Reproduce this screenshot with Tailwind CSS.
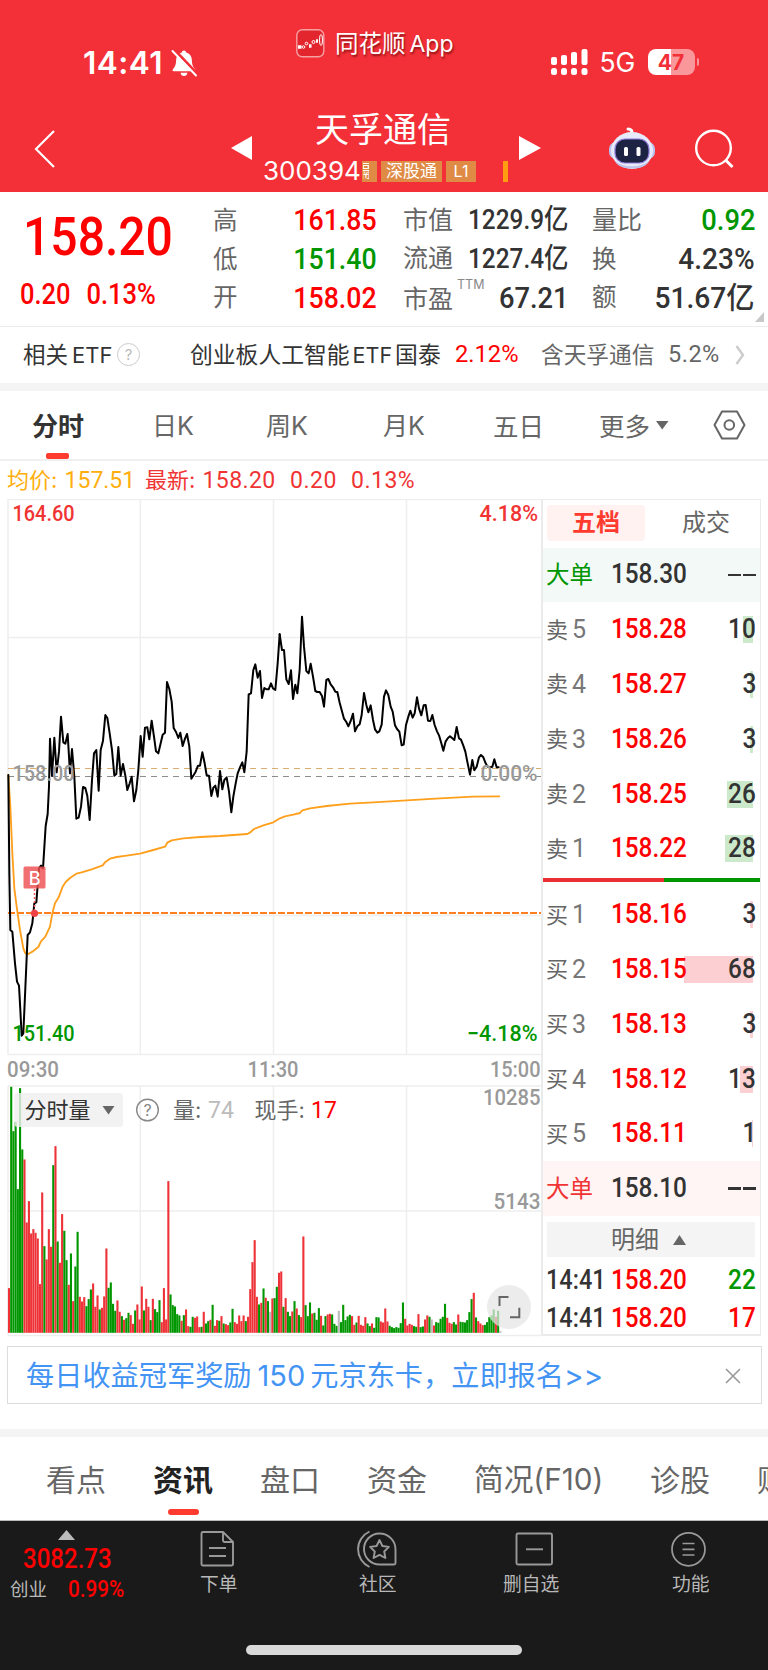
<!DOCTYPE html>
<html lang="zh-CN">
<head>
<meta charset="utf-8">
<title>天孚通信 300394</title>
<script src="https://cdn.jsdelivr.net/npm/@tailwindcss/browser@4"></script>
</head>
<body class="w-[768px] bg-white font-['Inter','Noto_Sans_CJK_SC',sans-serif] leading-none text-[#333] whitespace-nowrap overflow-x-hidden">
<div class="flex h-[1670px] w-[768px] flex-col overflow-hidden">

<!-- header -->
<header class="h-[192px] shrink-0 bg-[#f32f38] text-white">
  <div class="flex h-[96px] items-start">
    <div class="ml-[83px] mt-[47px] flex w-[213px] shrink-0 items-center">
      <span class="w-[86px] text-[31.500px] font-semibold tracking-[0.500px]">14:41</span>
      <svg class="ml-px" width="28" height="28" viewBox="0 0 28 28"><path d="M14 1.500c1.300 0 2.100.9 2.200 2 3.600 1 5.600 4 5.700 7.800.1 5 1.300 6.900 3.300 9.200.6.900.2 1.700-.8 1.700H3.600c-1 0-1.400-.8-.8-1.700 2-2.300 3.200-4.200 3.300-9.200.1-3.800 2.100-6.800 5.700-7.800.1-1.100.9-2 2.200-2zM10.500 23.700h7c-.3 2-1.700 3.300-3.500 3.300s-3.200-1.300-3.500-3.300z" fill="#fff"/><path d="M4.500 1 27 24.500" stroke="#f32f38" stroke-width="3"/><path d="M2.500 2 26 26.500" stroke="#fff" stroke-width="2" stroke-linecap="round"/></svg>
    </div>
    <div class="mt-[29px] flex w-[255px] shrink-0 items-center gap-[10px]">
      <svg width="29" height="29" viewBox="0 0 29 29"><rect x=".8" y=".8" width="27" height="27" rx="5.500" fill="#e3262e" stroke="#f5a0a2" stroke-width="1.400"/><path d="M2 18h3.500M13 17h2.500M20 12h2" stroke="#fff" stroke-width="3.500"/><g fill="none" stroke="#fff" stroke-width="1"><circle cx="7.500" cy="18" r="1.300"/><circle cx="10.500" cy="14.500" r="1.300"/><circle cx="17.500" cy="13" r="1.500"/><ellipse cx="25" cy="11" rx="1.500" ry="5.500"/></g></svg>
      <span class="text-[23.500px] [text-shadow:1px_2px_2px_rgba(80,0,0,.6)]">同花顺<span class="ml-[4px] text-[23px]">App</span></span>
    </div>
    <div class="mt-[48px] flex h-[28px] shrink-0 items-center">
      <svg width="38" height="28" viewBox="551 48 38 28" fill="#fff"><rect x="551" y="57" width="6" height="8" rx="2"/><rect x="561" y="55" width="6" height="10" rx="2"/><rect x="571" y="52" width="6" height="13" rx="2"/><rect x="581.500" y="49" width="6" height="16" rx="2"/><rect x="551" y="68" width="6" height="7" rx="2.500"/><rect x="561" y="68" width="6" height="7" rx="2.500"/><rect x="571" y="68" width="6" height="7" rx="2.500"/><rect x="581.500" y="68" width="6" height="7" rx="2.500"/></svg>
      <span class="ml-[10.500px] w-[36px] text-[26.500px]">5G</span>
      <div class="ml-[12px] flex h-[26px] w-[47px] items-center justify-center rounded-[8px] bg-linear-to-r from-white from-48% to-[#f9979b] to-48% text-[21px] font-bold text-[#f32f38]">47</div>
      <div class="ml-[2px] h-[8px] w-[2.500px] rounded-r-full bg-[#f9979b]"></div>
    </div>
  </div>
  <div class="flex h-[96px] items-start">
    <svg class="ml-[30px] mt-[30px] shrink-0" width="30" height="46" viewBox="30 126 30 46"><path d="M54 131 36 149l18 18" fill="none" stroke="#fff" stroke-width="2.200"/></svg>
    <svg class="ml-[171px] mt-[38px] shrink-0" width="22" height="28" viewBox="231 134 22 28"><path d="m231 148 21-12v24z" fill="#fff"/></svg>
    <div class="ml-[10px] mt-[17px] flex w-[246px] shrink-0 flex-col">
      <div class="pl-[52px] text-[34px]">天孚通信</div>
      <div class="mt-[13px] flex h-[22px] items-center">
        <span class="w-[99px] text-[26px]">300394</span>
        <span class="flex h-[21px] w-[15px] justify-end overflow-hidden bg-[#e08b45] pr-[8px] text-[17px] leading-[21px]"><span class="w-[6px] overflow-hidden"><span class="-ml-[2px]">融</span></span></span>
        <span class="ml-[4px] h-[21px] w-[61px] bg-[#e08b45] text-center text-[17px] leading-[21px]">深股通</span>
        <span class="ml-[4px] h-[21px] w-[30px] bg-[#e08b45] text-center text-[16px] leading-[21px]">L1</span>
        <span class="ml-[27px] h-[21px] w-[5px] bg-[#ff9d12]"></span>
      </div>
    </div>
    <svg class="ml-[10px] mt-[38px] shrink-0" width="23" height="28" viewBox="519 134 23 28"><path d="m541 148-22-12v24z" fill="#fff"/></svg>
    <svg class="ml-[66px] mt-[28px] shrink-0" width="48" height="48" viewBox="608 124 48 48"><path d="M631 133c2-2 0-4-3-4" stroke="#fff" stroke-width="3" fill="none" stroke-linecap="round"/><rect x="609" y="142" width="46" height="17" rx="7" fill="#b9c2ee"/><ellipse cx="632" cy="150.500" rx="21" ry="18.500" fill="#e6eafa"/><path d="M615 161c8 7 26 7 34 0-3 10-31 10-34 0z" fill="#bcc4e8"/><rect x="615" y="139" width="34" height="24" rx="10" fill="#1d2342" stroke="#8d7bd8" stroke-width="1.200"/><rect x="624" y="147" width="4" height="9" rx="1.500" fill="#fff"/><rect x="636.500" y="147" width="4" height="9" rx="1.500" fill="#fff"/></svg>
    <svg class="ml-[36px] mt-[30px] shrink-0" width="44" height="44" viewBox="692 126 44 44" fill="none" stroke="#fff" stroke-width="2.400"><circle cx="713.500" cy="148" r="17.300"/><path d="m725.500 160 7 7" stroke-width="3"/></svg>
  </div>
</header>

<!-- quote -->
<section class="relative grid h-[134px] shrink-0 grid-cols-[213px_190px_189px_176px] pt-[9px] text-[24.500px] text-[#666]">
  <div class="font-[Roboto] font-medium text-[#ff0000]">
    <div class="ml-[23px] mt-[9px] origin-left scale-x-[.89] text-[54px]">158.20</div>
    <div class="ml-[20px] mt-[16px] flex gap-[18px] origin-left scale-x-[.88] text-[29px]"><span>0.20</span><span>0.13%</span></div>
  </div>
  <div class="grid h-[116px] grid-rows-3 items-center pr-[26px] *:flex *:items-center *:justify-between">
    <div><span>高</span><span class="origin-right scale-x-[.89] font-[Roboto] text-[30px] font-medium text-[#ff0000]">161.85</span></div>
    <div><span>低</span><span class="origin-right scale-x-[.89] font-[Roboto] text-[30px] font-medium text-[#009600]">151.40</span></div>
    <div><span>开</span><span class="origin-right scale-x-[.89] font-[Roboto] text-[30px] font-medium text-[#ff0000]">158.02</span></div>
  </div>
  <div class="grid h-[116px] grid-rows-3 items-center pr-[26px] *:flex *:items-center *:justify-between">
    <div><span class="text-[25px]">市值</span><span class="origin-right scale-x-[.87] font-['Roboto','Noto_Sans_CJK_SC'] text-[28px] font-medium text-[#333]">1229.9亿</span></div>
    <div><span class="text-[25px]">流通</span><span class="origin-right scale-x-[.87] font-['Roboto','Noto_Sans_CJK_SC'] text-[28px] font-medium text-[#333]">1227.4亿</span></div>
    <div><span class="flex pt-[3px] text-[25px]">市盈<span class="ml-[4px] -mt-[8px] text-[12.500px] text-[#888]">TTM</span></span><span class="origin-right scale-x-[.91] font-[Roboto] text-[30px] font-medium text-[#333]">67.21</span></div>
  </div>
  <div class="grid h-[116px] grid-rows-3 items-center pr-[13px] *:flex *:items-center *:justify-between">
    <div><span class="text-[25px]">量比</span><span class="origin-right scale-x-[.91] font-[Roboto] text-[30px] font-medium text-[#009600]">0.92</span></div>
    <div><span>换</span><span class="origin-right scale-x-[.935] font-[Roboto] text-[30px] font-medium text-[#333]">4.23%</span></div>
    <div><span>额</span><span class="origin-right scale-x-[.94] font-['Roboto','Noto_Sans_CJK_SC'] text-[30px] font-medium text-[#333]">51.67亿</span></div>
  </div>
  <svg class="absolute left-[755px] top-[120px]" width="10" height="10"><path d="M0 10 9 0v10z" fill="#c8c8c8"/></svg>
</section>

<!-- related ETF -->
<section class="flex h-[57px] shrink-0 items-center border-t border-[#ebebeb] text-[22.500px]">
  <span class="ml-[23px] w-[94px] shrink-0">相关<span class="ml-[4px] text-[22px]">ETF</span></span>
  <span class="-mt-[2px] flex size-[23px] shrink-0 items-center justify-center rounded-full border-[1.500px] border-[#ccc] text-[15px] text-[#bbb]">?</span>
  <span class="ml-[50px] w-[265px] shrink-0 text-[22.800px]">创业板人工智能<span class="ml-[3px] mr-[3px] text-[21.500px]">ETF</span>国泰</span>
  <span class="w-[86px] shrink-0 font-[Roboto] text-[23.700px] text-[#ff0000]">2.12%</span>
  <span class="w-[127px] shrink-0 text-[22.700px] text-[#666]">含天孚通信</span>
  <span class="w-[67px] shrink-0 font-[Roboto] text-[23.500px] tracking-[0.500px] text-[#666]">5.2%</span>
  <svg width="10" height="20" viewBox="0 0 10 20"><path d="m1.500 1 6.500 9-6.500 9" fill="none" stroke="#ccc" stroke-width="2.400"/></svg>
</section>
<div class="h-[8px] shrink-0 bg-[#f4f4f4]"></div>

<!-- period tabs -->
<nav class="flex h-[70px] shrink-0 items-center border-b-2 border-[#f0f0f0] pt-[3px] text-[25px] text-[#666]">
  <div class="relative ml-[32px] w-[120px] shrink-0 text-[26px] font-bold text-[#333]">分时<span class="absolute left-[14px] top-[39px] h-[6px] w-[23px] rounded-[2px] bg-[#ff3b30]"></span></div>
  <span class="w-[114px] shrink-0">日K</span>
  <span class="w-[117px] shrink-0">周K</span>
  <span class="w-[110px] shrink-0">月K</span>
  <span class="w-[106px] shrink-0 text-[25.500px]">五日</span>
  <span class="w-[57px] shrink-0 text-[25.500px]">更多</span>
  <svg class="-mt-[3px] shrink-0" width="13" height="9"><path d="M0 0h12.500L6.200 8.500z" fill="#666"/></svg>
  <svg class="-mt-[3px] ml-[44px] shrink-0" width="33" height="30" viewBox="0 0 33 30" fill="none" stroke="#666" stroke-width="2"><path d="M9 1.500h15L31.500 15 24 28.500H9L1.500 15z" stroke-linejoin="round"/><circle cx="16.300" cy="15" r="4.800"/></svg>
</nav>
<div class="flex h-[38px] shrink-0 items-center pt-px text-[22px] text-[#f03434]">
  <span class="ml-[7px] w-[138px] shrink-0 text-[#ffae0d]">均价: <span class="ml-px font-[Roboto] text-[23px]">157.51</span></span>
  <span class="w-[145px] shrink-0">最新: <span class="ml-px font-[Roboto] text-[23px] tracking-[0.400px]">158.20</span></span>
  <span class="w-[61px] shrink-0 font-[Roboto] text-[23px] tracking-[0.500px]">0.20</span>
  <span class="font-[Roboto] text-[23px] tracking-[0.500px]">0.13%</span>
</div>

<!-- chart and order book -->
<main class="flex h-[847px] shrink-0">
  <svg class="shrink-0" width="541" height="847" viewBox="0 499 541 847">
    <g fill="none" stroke="#eee" stroke-width="1.500">
      <path d="M8 499.500H541M8 1054.500H541M8 499v556M140.300 499v555M273.500 499v555M406.500 499v555M8 637.500H541M8 915.500H541"/>
      <path d="M8 1086H541M8 1335.500H541M8 1086v249M140.300 1086v249M273.500 1086v249M406.500 1086v249M8 1211H541"/>
    </g>
    <path d="M8 768.500H541" stroke="#dcae6e" stroke-width="1" stroke-dasharray="6 5"/>
    <path d="M8 776.500H541" stroke="#8c8c8c" stroke-width="1.200" stroke-dasharray="6 5"/>
    <path d="M8 913H541" stroke="#ff7f1e" stroke-width="1.800" stroke-dasharray="7 2"/>
    <g fill="none" stroke="#ff9f1c" stroke-width="5.500" stroke-linejoin="round" stroke-linecap="round">
      <polyline transform="translate(0 740) scale(.33333)" points="25,105 31,200 37,340 43,445 50,500 60,570 70,625 76,640 85,642 97,635 115,621 123,604 136,590 150,560 157,520 165,490 176,472 188,440 197,426 210,414 229,401 245,397 275,388 308,376 315,367 330,356 350,351 380,347 420,341 460,330 495,320 502,308 515,301 550,295 600,291 660,288 742,282 750,278 762,267 790,256 820,247 840,235 855,229 880,224 900,219 907,211 930,205 980,198 1050,191 1120,187 1220,181 1320,175 1420,170 1498,169"/>
    </g>
    <g fill="none" stroke="#000" stroke-width="6" stroke-linejoin="round" stroke-linecap="round">
      <polyline transform="translate(0 490) scale(.33333)" points="25,855 28,1150 31,1320 37,1325 45,1420 51,1475 57,1487 61,1560 65,1637 70,1630 76,1495 83,1335 90,1327 97,1300 103,1240 109,1237 117,1135 123,1127 129,1135 137,1008 143,972 147,890 150,746 156,858 163,743 170,847 177,785 183,680 190,757 196,761 203,732 210,850 216,777 223,860 229,986 236,983 243,950 249,891 256,894 262,918 269,990 276,870 282,790 289,780 296,902 302,780 309,752 316,675 322,684 329,730 336,780 343,857 349,852 355,771 362,857 369,822 376,857 382,900 389,880 395,860 402,934 409,900 415,840 422,738 428,800 435,713 442,712 448,748 455,692 462,740 468,784 475,790 482,760 488,734 495,728 501,576 508,597 515,635 521,714 528,726 535,744 541,728 548,768 555,746 561,732 568,770 574,866 581,855 587,845 594,827 600,827 607,787 614,820 620,856 627,857 634,918 640,893 646,887 653,920 660,843 667,898 673,870 680,862 687,905 694,967 700,920 707,880 713,850 720,832 727,817 733,847 740,785 746,613 753,610 760,540 766,523 773,563 780,543 786,624 793,594 800,598 806,598 813,580 819,595 826,600 833,520 839,433"/>
      <polyline transform="translate(260 590) scale(.33333)" points="59,133 66,180 72,180 79,268 86,282 93,241 99,327 106,284 112,310 119,240 126,80 132,170 139,243 146,250 152,221 159,260 166,303 172,306 179,306 186,318 192,350 199,270 205,267 212,283 219,292 226,305 232,306 239,338 252,386 259,396 265,409 272,393 279,371 285,424 292,409 299,403 305,375 312,309 319,345 325,367 332,346 339,390 345,418 352,428 358,424 365,404 372,320 378,301 385,315 392,350 398,365 405,406 411,417 418,425 425,466 431,464 438,405 445,380 451,362 458,383 464,370 471,322 477,355 484,376 491,346 497,345 504,392 511,393 517,375 524,405 531,424 537,436 544,460 550,482 557,454 564,444 570,439 577,445 583,450 590,411 597,445 603,449 610,467 616,485 623,520 630,554 637,510 643,541 650,530 657,502 663,495 670,502 677,520 683,530 690,532 697,530 703,508 710,532 716,532"/>
    </g>
    <path d="M34.500 889v22" stroke="#f0585c" stroke-width="1.500" stroke-dasharray="2 2"/>
    <circle cx="34.500" cy="913.300" r="3.600" fill="#ee4246"/>
    <rect x="23.500" y="866.500" width="22" height="22" rx="1.500" fill="#ee4e52" fill-opacity=".82"/>
    <text x="34.700" y="884.500" text-anchor="middle" class="fill-white font-[Inter] text-[18px] font-medium">B</text>

    <g id="volume"></g>

    <g class="font-[Roboto] text-[22.500px] font-medium">
      <text x="12.500" y="521" fill="#f03434" textLength="62" lengthAdjust="spacingAndGlyphs">164.60</text>
      <text x="479.500" y="521" fill="#f03434" textLength="58.500" lengthAdjust="spacingAndGlyphs">4.18%</text>
      <text x="12.500" y="781" fill="#999" textLength="62" lengthAdjust="spacingAndGlyphs">158.00</text>
      <text x="480.500" y="781" fill="#999" textLength="57" lengthAdjust="spacingAndGlyphs">0.00%</text>
      <text x="12.500" y="1041" fill="#009600" textLength="62" lengthAdjust="spacingAndGlyphs">151.40</text>
      <text x="467" y="1041" fill="#009600" textLength="70.500" lengthAdjust="spacingAndGlyphs">−4.18%</text>
      <g fill="#999">
        <text x="7" y="1077" textLength="52" lengthAdjust="spacingAndGlyphs">09:30</text>
        <text x="247.500" y="1077" textLength="51" lengthAdjust="spacingAndGlyphs">11:30</text>
        <text x="490" y="1077" textLength="50.500" lengthAdjust="spacingAndGlyphs">15:00</text>
        <text x="483" y="1104.500" textLength="57.500" lengthAdjust="spacingAndGlyphs">10285</text>
        <text x="493.500" y="1209" textLength="47" lengthAdjust="spacingAndGlyphs">5143</text>
      </g>
    </g>

    <rect x="14.500" y="1093" width="108.500" height="34" rx="3" fill="#efefef" fill-opacity=".82"/>
    <g class="font-['Inter','Noto_Sans_CJK_SC'] text-[22px]" fill="#666">
      <text x="24.500" y="1118" fill="#333">分时量</text>
      <path d="M102.500 1106h12l-6 8.500z"/>
      <circle cx="147.500" cy="1110" r="10.800" fill="none" stroke="#888" stroke-width="1.400"/>
      <text x="147.500" y="1116" text-anchor="middle" class="text-[16px]" fill="#888">?</text>
      <text x="173" y="1118">量:</text>
      <text x="208" y="1118" fill="#bbb" class="font-[Roboto] text-[23px]">74</text>
      <text x="254.500" y="1118">现手:</text>
      <text x="311" y="1118" fill="#ff0000" class="font-[Roboto] text-[23px]">17</text>
    </g>
    <circle cx="509" cy="1307" r="22" fill="#e4e4e4" fill-opacity=".72"/>
    <path d="M499.500 1306v-9h9M510 1317.300h9.300v-9.500" fill="none" stroke="#666" stroke-width="2"/>
  </svg>

  <section class="flex h-[837px] w-[220px] shrink-0 flex-col border-2 border-r border-t border-[#ebebeb] text-[22px] text-[#666]">
    <div class="flex h-[47.500px] shrink-0 items-center pb-[2px] pl-[4px]">
      <span class="flex h-[36px] w-[98px] items-center justify-center rounded-[4px] bg-[#fff2f1] text-[24px] font-bold text-[#ff3b30]">五档</span>
      <span class="ml-[37px] text-[24px]">成交</span>
    </div>
    <div id="asks" class="flex flex-col"></div>
    <div class="mt-[2px] flex h-[4px] shrink-0"><span class="w-[121px] bg-[#ea2e33]"></span><span class="grow bg-[#009600]"></span></div>
    <div id="bids" class="mt-[5px] flex flex-col"></div>
    <div class="ml-[4px] mt-[6px] flex h-[35px] w-[208px] shrink-0 items-center justify-center gap-[14px] bg-[#f4f4f4] pr-[5px] text-[24px]">明细<svg width="13" height="10"><path d="M0 10h13L6.500 0z" fill="#666"/></svg></div>
    <div class="mt-[4px] flex h-[38px] shrink-0 items-center pl-[3px] pr-[4px] font-[Roboto] text-[27px] font-medium">
      <span class="w-[65px] origin-left scale-x-[.87] text-[#333]">14:41</span><span class="origin-left scale-x-[.9] text-[#ff0000]">158.20</span><span class="ml-auto origin-right scale-x-[.9] text-[#009600]">22</span>
    </div>
    <div class="flex h-[38px] shrink-0 items-center pl-[3px] pr-[4px] font-[Roboto] text-[27px] font-medium">
      <span class="w-[65px] origin-left scale-x-[.87] text-[#333]">14:41</span><span class="origin-left scale-x-[.9] text-[#ff0000]">158.20</span><span class="ml-auto origin-right scale-x-[.9] text-[#ff0000]">17</span>
    </div>
  </section>
</main>

<!-- banner -->
<div class="ml-[7px] flex h-[58px] w-[755px] shrink-0 items-center border-[1.500px] border-[#dcdcdc] pl-[18px] pt-px text-[28.200px] text-[#4394f4]">
  <span>每日收益冠军奖励<span class="ml-[6px] mr-[5px] text-[29px]">150</span>元京东卡，立即报名<span class="text-[29.500px]">&gt;&gt;</span></span>
  <svg class="ml-auto mr-[20px]" width="16" height="16" viewBox="0 0 16 16"><path d="m1 1 14 14M15 1 1 15" stroke="#999" stroke-width="1.600"/></svg>
</div>
<div class="mt-[25px] h-[8px] shrink-0 bg-[#f4f4f4]"></div>

<!-- section tabs -->
<nav class="flex h-[84px] shrink-0 items-center border-b border-[#bbb] pt-[2px] text-[30px] text-[#666]">
  <span class="ml-[46px] w-[107px] shrink-0">看点</span>
  <div class="relative w-[107px] shrink-0 font-bold text-[#222]">资讯<span class="absolute left-[15px] top-[44px] h-[6px] w-[31px] rounded-[3px] bg-[#ff3b30]"></span></div>
  <span class="w-[107px] shrink-0">盘口</span>
  <span class="w-[107px] shrink-0">资金</span>
  <span class="w-[176px] shrink-0 text-[29.700px]">简况(F10)</span>
  <span class="w-[107px] shrink-0">诊股</span>
  <span>财</span>
</nav>

<!-- bottom bar -->
<footer class="flex h-[149px] shrink-0 flex-col bg-[#1a1a1a] text-[18.500px] text-[#b8b8b8]">
  <div class="flex h-[124px] items-start">
    <div class="flex w-[139px] shrink-0 flex-col">
      <svg class="ml-[58px] mt-[9px]" width="17" height="10"><path d="M0 10h17L8.500 0z" fill="#bbb"/></svg>
      <span class="ml-[23px] mt-[6px] origin-left scale-x-[.89] font-[Roboto] text-[27px] font-medium text-[#ff0000]">3082.73</span>
      <div class="mt-[5px] flex items-center"><span class="ml-[10px] w-[58px]">创业</span><span class="origin-left scale-x-[.9] font-[Roboto] text-[23px] font-medium text-[#ff0000]">0.99%</span></div>
    </div>
    <div class="ml-[61px] flex w-[38px] shrink-0 flex-col items-start">
      <svg class="mt-[9px]" width="36" height="38" viewBox="200 1530 36 38" fill="none" stroke="#999" stroke-width="1.900"><path d="M203 1532h20l10 10v22a1.500 1.500 0 0 1-1.500 1.500H203a1.500 1.500 0 0 1-1.500-1.500v-30.500a1.500 1.500 0 0 1 1.500-1.500zM223 1532v8.500a1.500 1.500 0 0 0 1.500 1.500h8.500M209 1548h17M209 1556h17"/></svg>
      <span class="mt-[8px] text-[18.800px]">下单</span>
    </div>
    <div class="ml-[118px] flex w-[42px] shrink-0 flex-col items-start">
      <svg class="mt-[9px]" width="42" height="38" viewBox="355 1530 42 38" fill="none" stroke="#999" stroke-width="1.900"><path d="M378.500 1533.500a16 16 0 0 1 16 16V1563a1.500 1.500 0 0 1-1.500 1.500h-14.500a15.500 15.500 0 0 1 0-31z"/><path d="M368.500 1531.500a19.500 19.500 0 0 0 0 35.500"/><path d="m378.500 1540 2.900 6 6.500.9-4.700 4.600 1.200 6.500-5.900-3.100-5.900 3.100 1.200-6.500-4.700-4.600 6.500-.9z" stroke-linejoin="round"/></svg>
      <span class="ml-[3px] mt-[8px] text-[18.800px]">社区</span>
    </div>
    <div class="ml-[105px] flex w-[58px] shrink-0 flex-col items-start">
      <svg class="ml-[10px] mt-[9px]" width="40" height="38" viewBox="513 1530 40 38" fill="none" stroke="#999" stroke-width="1.900"><rect x="516.500" y="1533.500" width="35.500" height="31" rx="1.500"/><path d="M526 1549.300h17"/></svg>
      <span class="mt-[8px] text-[18.800px]">删自选</span>
    </div>
    <div class="ml-[111px] flex w-[40px] shrink-0 flex-col items-start">
      <svg class="-ml-[3px] mt-[9px]" width="40" height="38" viewBox="669 1530 40 38" fill="none" stroke="#999" stroke-width="1.700"><circle cx="688.500" cy="1549.300" r="16.500"/><path d="M682.500 1543.500h12M682.500 1549.300h12M682.500 1555h12"/></svg>
      <span class="mt-[8px] text-[18.800px]">功能</span>
    </div>
  </div>
  <div class="ml-[246px] h-[10px] w-[276px] rounded-full bg-[#d9d9d9]"></div>
</footer>
</div>

<script>
// Minute volumes: colour code (r up, g down, x flat) followed by the bar's top on a 3x scale with the baseline at 818.
const bars = "r684 g80 g213 g185 g387 g84 g268 r298 r487 r423 r520 r507 r518 r535 r672 r397 g558 r598 r507 r560 g315 r258 g544 r608 r462 g512 g600 r674 g580 r723 g619 g515 r710 r724 r711 g738 g717 g688 r670 r740 r706 g748 r743 r709 r565 g683 g667 g731 g752 r721 r755 g768 r779 g774 g758 r765 r791 g751 r733 r778 r679 g751 r716 r740 g780 r716 g747 g756 g720 r786 r684 r778 r363 g703 g735 g739 g762 g766 r782 g765 r748 r798 g800 g770 r773 r769 r801 g800 r755 g790 g783 r779 g734 r797 r780 g782 r768 g790 r792 r795 g787 g746 r786 r791 r766 r783 r766 g783 r770 r687 r606 r540 r710 g733 r728 g685 r713 g723 x755 r715 g714 g680 r638 r634 g740 r714 g755 g768 r754 g723 r745 g765 r771 r529 g735 g768 g727 r760 g758 g779 g744 r767 g796 g768 r763 r761 g763 g791 g797 x752 g786 g734 g780 g769 g764 r768 r794 g787 r767 r794 r797 r771 g790 g798 r790 g803 g771 g772 r784 r787 r745 r784 g797 g801 g804 g801 g803 g789 g727 r776 r796 r791 r794 g798 g800 r762 g801 g799 r778 r766 g770 x778 r796 g786 g788 g776 g770 g731 r773 r788 r791 g786 g793 r763 g785 g786 g787 g780 g756 g717 r698 g772 r783 r790 r795 g794 g786 g771 g766 g748 r770 g752 x813".split(" ");
const fills = { r: "#ee3338", g: "#009600", x: "#bbbbbb" };
document.getElementById("volume").innerHTML = bars.map((b, i) => {
  const h = (818 - Number(b.slice(1))) / 3;
  return `<rect x="${(7.95 + i * 2.2133).toFixed(2)}" y="${(1332.8 - h).toFixed(2)}" width="2.1" height="${h.toFixed(2)}" fill="${fills[b[0]]}"/>`;
}).join("");

function bigOrder(price, tone) {
  const cls = tone === "sell" ? "bg-[#f2f9f6]" : "bg-[#fff5f5]";
  const label = tone === "sell" ? "text-[#009600]" : "text-[#f03434]";
  return `<div class="flex h-[54.8px] items-center pl-[3px] pr-[4px] ${cls}"><span class="w-[65px] text-[23.5px] ${label}">大单</span><span class="origin-left scale-x-[.9] font-[Roboto] text-[27px] font-medium text-[#333]">${price}</span><span class="ml-auto flex gap-[2px]"><i class="h-[2.5px] w-[13px] bg-[#333]"></i><i class="h-[2.5px] w-[13px] bg-[#333]"></i></span></div>`;
}
function level(label, n, price, qty, width, tone) {
  const cls = tone === "sell" ? "bg-[#cceacb]" : "bg-[#fcd0d2]";
  return `<div class="relative flex h-[54.8px] items-center pl-[3px] pr-[4px]"><span class="absolute right-[7px] top-[14px] h-[27px] ${cls}" style="width:${width}px"></span><span class="relative flex w-[65px] items-center gap-[4px]">${label}<span class="text-[25px] text-[#777] font-[Roboto]">${n}</span></span><span class="relative origin-left scale-x-[.9] font-[Roboto] text-[27px] font-medium text-[#ff0000]">${price}</span><span class="relative ml-auto origin-right scale-x-[.9] font-[Roboto] text-[27px] font-medium text-[#333]">${qty}</span></div>`;
}
document.getElementById("asks").innerHTML = bigOrder("158.30", "sell") +
  [[5, "158.28", 10, 10], [4, "158.27", 3, 3], [3, "158.26", 3, 3], [2, "158.25", 26, 26.5], [1, "158.22", 28, 28]]
    .map(r => level("卖", ...r, "sell")).join("");
document.getElementById("bids").innerHTML =
  [[1, "158.16", 3, 3], [2, "158.15", 68, 69], [3, "158.13", 3, 3], [4, "158.12", 13, 13], [5, "158.11", 1, 1]]
    .map(r => level("买", ...r, "buy")).join("") + bigOrder("158.10", "buy");
</script>
</body>
</html>
